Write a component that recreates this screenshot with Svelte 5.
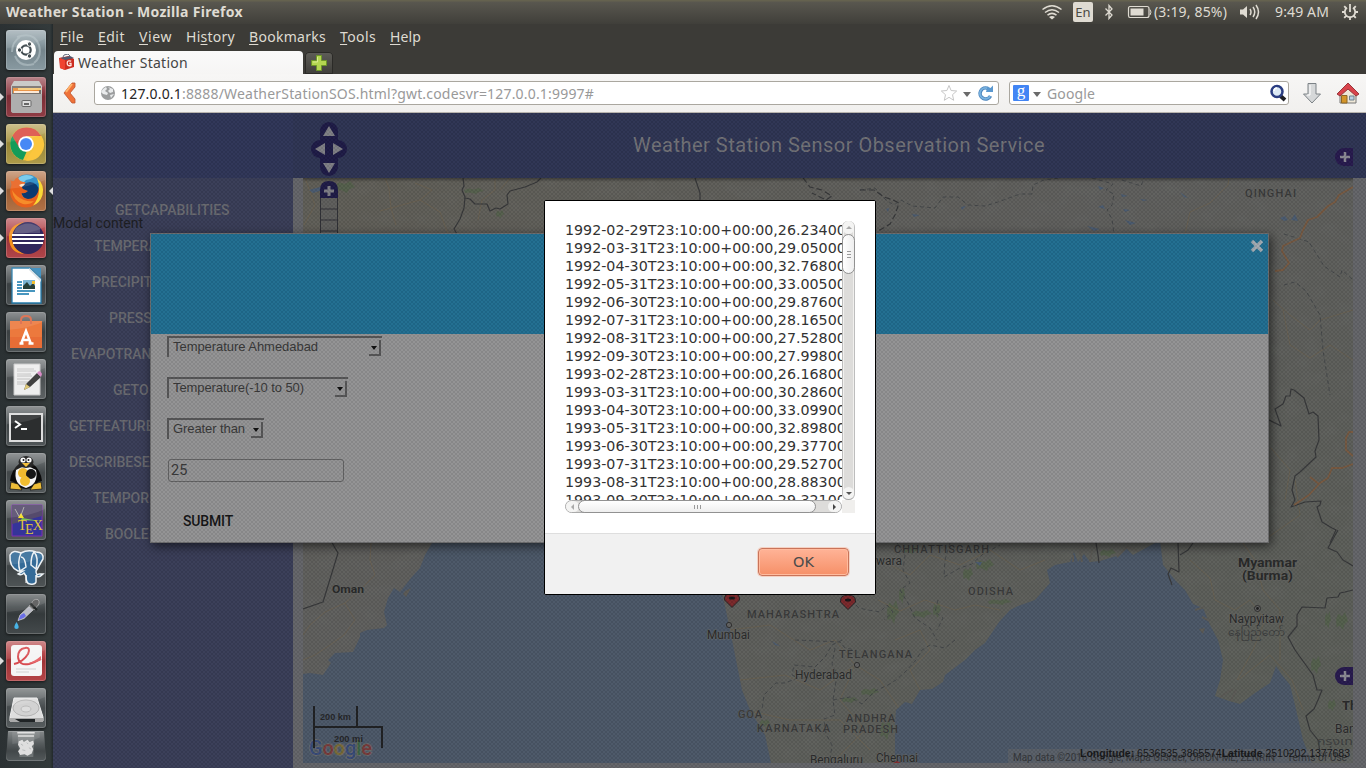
<script>
  // Tracks a label so that it fills the given width.
  function fit(node, width) {
    const natural = node.getBoundingClientRect().width;
    const count = node.textContent.length;
    node.style.letterSpacing = (width - natural) / count + 'px';
  }

  const menus = [
    ['', 'F', 'ile', 24], ['', 'E', 'dit', 27], ['', 'V', 'iew', 33], ['Hi', 's', 'tory', 49],
    ['', 'B', 'ookmarks', 77], ['', 'T', 'ools', 36], ['', 'H', 'elp', 31]
  ];

  const launchers = [
    { id: 'dash', bg: '#82949c' },
    { id: 'files', bg: '#89323b', run: true },
    { id: 'chrome', bg: '#aa9640', run: true },
    { id: 'firefox', bg: '#ad6a3c', run: true, active: true },
    { id: 'eclipse', bg: '#ad3b40', run: true },
    { id: 'writer', bg: '#42484a' },
    { id: 'software', bg: '#42484a' },
    { id: 'editor', bg: '#555a5c' },
    { id: 'terminal', bg: '#474d4f' },
    { id: 'penguin', bg: '#4a5052' },
    { id: 'tex', bg: '#4a5052' },
    { id: 'postgres', bg: '#454b4d' },
    { id: 'picker', bg: '#3a4042' },
    { id: 'pdf', bg: '#b03a3d', run: true },
    { id: 'disk', bg: '#4d5355' },
    { id: 'trash', bg: '#4a5052' }
  ];

  const operations = [
    ['GETCAPABILITIES', 62], ['TEMPERA', 41], ['PRECIPIT', 39], ['PRESS', 56],
    ['EVAPOTRAN', 18], ['GETO', 60], ['GETFEATURE', 16],
    ['DESCRIBESE', 16], ['TEMPOR', 40], ['BOOLE', 52]
  ];

  const selects = [['Temperature Ahmedabad', 215, 145], ['Temperature(-10 to 50)', 181, 131], ['Greater than', 97, 72]];

  const observations = [
    '1992-02-29T23:10:00+00:00,26.23400', '1992-03-31T23:10:00+00:00,29.05000',
    '1992-04-30T23:10:00+00:00,32.76800', '1992-05-31T23:10:00+00:00,33.00500',
    '1992-06-30T23:10:00+00:00,29.87600', '1992-07-31T23:10:00+00:00,28.16500',
    '1992-08-31T23:10:00+00:00,27.52800', '1992-09-30T23:10:00+00:00,27.99800',
    '1993-02-28T23:10:00+00:00,26.16800', '1993-03-31T23:10:00+00:00,30.28600',
    '1993-04-30T23:10:00+00:00,33.09900', '1993-05-31T23:10:00+00:00,32.89800',
    '1993-06-30T23:10:00+00:00,29.37700', '1993-07-31T23:10:00+00:00,29.52700',
    '1993-08-31T23:10:00+00:00,28.88300', '1993-09-30T23:10:00+00:00,29.32100'
  ];

  const sea = [
    'M303 674L310 673L323 675L331 663L328 660L335 653L353 652L360 637V633L367 630L384 628L387 625L384 612L388 598L394 588L400 592L411 578L420 568L425 555L432 543L450 520H722V595L725 606L730 630L735 655L742 690L750 710L765 735L771 763H303Z',
    'M895 763V725L896 710L905 702L912 704L920 690L932 689L943 682L945 675L965 660L975 650L985 643L999 622L1010 610L1018 606L1035 600L1050 583L1047 570L1055 565L1070 562L1074 552L1078 562L1084 554L1090 562L1100 561L1120 555L1126 548L1133 555L1155 543L1160 540L1163 565L1175 580L1185 590L1193 604L1203 608L1210 625L1218 640L1223 660L1220 680L1215 696L1229 701L1240 704L1255 693L1270 683L1276 666L1282 675L1290 685L1295 705L1303 740L1312 763Z'
  ];

  const borders = [
    'M463 178L464 186L462 190L465 197L464 208L460 219L454 229L457 234M465 198L470 199L475 204L487 204L490 211L496 208L500 209L508 204L507 195L510 191L525 187L537 182L541 178',
    'M695 178L700 193V205',
    'M331 541L338 553L323 602L303 609',
    'M1269 420L1281 426L1275 409L1283 404L1286 396H1290L1291 389L1294 390L1304 398L1309 414L1313 412L1318 416L1319 440L1315 451L1316 457L1300 472L1295 476L1292 490L1295 500L1291 507L1305 502L1321 501L1320 505L1317 507L1322 522L1332 528L1336 530L1330 543',
    'M1338 530L1328 548L1337 552L1343 560L1353 566M1353 590L1345 592L1340 593L1338 597L1327 598L1325 608L1302 607L1297 615V626L1288 637L1295 650L1313 675L1317 690L1322 690L1318 700L1314 709L1306 716L1310 730L1318 740L1320 752L1327 757',
    'M1096 543L1098 555L1099 563M1178 542L1179 572L1171 568L1168 574L1172 585M1180 555L1188 550L1193 543'
  ];

  const states = [
    'M860 190L875 188L886 200L894 205L901 200L912 206L935 208L943 197L958 197L968 205L985 206L998 202L1020 194H1032L1033 185L1044 180L1060 178M1092 178L1113 184L1106 190L1114 194L1112 205L1107 210L1112 219L1114 234M1122 180L1141 186L1144 178',
    'M1284 234L1300 239L1309 242L1324 266L1340 277L1342 270L1353 280M1284 285L1295 282L1306 291L1320 315L1323 350L1330 395',
    'M795 640L840 642L845 648L855 650L860 658M842 640L832 645L825 657L815 667L794 665L792 675L798 678L785 683H776L764 695L762 710M835 648L832 664L837 675L833 700L835 715L824 719L826 734L832 745L830 760M833 700L850 697L862 704L875 691L888 685L896 680L905 672L916 660L922 650L930 645L945 648L955 640M851 600L859 608L868 610L880 612L887 605L893 612L884 620',
    'M897 543L905 555L903 570L910 583L900 590L908 603L915 618L930 628L937 640M950 543L945 560L944 577L960 568L972 564L983 554L1000 545M938 600L935 612L943 618L937 630'
  ];

  // National border of the high ranges north of the plains, in heavier dashes.
  const ranges = [
    'M803 178L810 187L822 190L832 196L826 200L812 193M860 190L874 190L884 197L893 200L899 203L895 215L890 224L880 230H872'
  ];

  const roads = [
    'M305 178L315 205L304 225M385 178L389 188L391 208L380 211M391 208L396 225M391 208L420 200L432 190L415 183M420 200L440 212L448 234M495 178L495 190L482 200L478 220M500 190L510 178',
    'M371 543L370 560L375 575L360 590L345 603L355 620L344 635L330 645L315 655L303 660M345 603L325 612L310 625L303 635',
    'M878 600L900 611L925 600L955 610L975 605L1000 610M880 560L910 575L930 555L960 565L990 550L1020 570L1045 560M895 640L920 630L930 650L910 670L925 700M730 630L770 625L810 650L835 640L855 665L840 700L865 730L835 760M740 680L785 675L820 690L855 665L880 680L900 710M745 710L790 720L840 720L870 750',
    'M1190 560L1210 578L1215 600L1235 610L1250 600L1265 620L1253 650L1237 680M1243 543L1255 560L1263 590L1280 610L1280 660M1238 680L1270 655L1292 680L1303 710',
    'M1273 300L1290 315L1310 330L1320 320L1353 310M1283 310L1290 345L1310 358L1330 345L1353 360M1271 448L1290 470L1285 500M1260 543L1300 515L1295 480M1190 212L1210 203L1228 185L1229 178M1185 234L1190 212'
  ];

  const labels = [
    ['QINGHAI', 1245, 196.5, 51, 'state'], ['CHHATTISGARH', 894, 552.5, 95, 'state'],
    ['MAHARASHTRA', 747, 617.5, 92, 'state'], ['ODISHA', 968, 594.5, 45, 'state'],
    ['TELANGANA', 839, 657.5, 73, 'state'], ['GOA', 738, 717.5, 24, 'state'],
    ['KARNATAKA', 757, 731.5, 73, 'state'], ['ANDHRA', 846, 721.5, 49, 'state'],
    ['PRADESH', 843, 732.5, 55, 'state'], ['Mumbai', 707, 639, 43, 'city'],
    ['Hyderabad', 795, 679, 57, 'city'], ['Bengaluru', 810, 763.5, 53, 'city'],
    ['Chennai', 876, 761.5, 42, 'city'], ['Naypyitaw', 1229, 623, 55, 'city'],
    ['နေပြည်တော်', 1228, 636, 57, 'native'], ['Oman', 332, 593, 32, 'nation small'],
    ['Myanmar', 1238, 567, 59, 'nation'], ['(Burma)', 1242, 580, 51, 'nation']
  ];

  const patches = [
    [345, 187, 10, 6], [474, 191, 10, 3], [500, 214, 4, 4], [911, 550, 8, 4], [922, 614, 10, 4],
    [893, 612, 6, 12], [902, 595, 3, 9], [937, 610, 4, 8], [985, 565, 9, 6], [968, 574, 5, 7],
    [1000, 602, 12, 3], [870, 692, 9, 4], [850, 700, 8, 3], [765, 723, 5, 4], [886, 730, 6, 10],
    [1328, 620, 3, 9], [1342, 621, 6, 9], [1316, 665, 5, 9], [1332, 705, 4, 6], [1108, 553, 8, 4]
  ];
</script>

<div class="desktop">
  <header class="panel">
    <strong use:fit={237}>Weather Station - Mozilla Firefox</strong>
    <div class="indicators">
      <svg class="wifi" viewBox="0 0 22 16" fill="none" stroke="#dfdbd2" stroke-width="1.5">
        <path d="M1.5 5.5Q11-2 20.5 5.5M4 8.5Q11 3 18 8.5M6.5 11.2Q11 7.5 15.5 11.2" />
        <path d="M8 13Q11 10.8 14 13L11 15.5Z" fill="#dfdbd2" stroke="none" />
      </svg>
      <span class="lang">En</span>
      <svg class="bt" viewBox="0 0 12 18" fill="none" stroke="#dfdbd2" stroke-width="1.3"><path d="M2.500 5.500L9 12L6 15.500V2.500L9 6L2.500 12.500" /></svg>
      <svg class="battery" viewBox="0 0 26 14"><path d="M3 1.5H20Q22 1.5 22 3.5V10.5Q22 12.5 20 12.5H3Q1.5 12.5 1.5 10.5V3.5Q1.5 1.5 3 1.5Z" fill="none" stroke="#dfdbd2" stroke-width="1.2" /><path d="M23 4.5Q25 7 23 10" fill="none" stroke="#dfdbd2" /><path d="M3.5 3.5H16.5V10.5H3.5Z" fill="#dfdbd2" /></svg>
      <span class="charge" use:fit={73}>(3:19, 85%)</span>
      <svg class="sound" viewBox="0 0 22 16"><path d="M1 5.5H4L8 2V14L4 10.5H1Z" fill="#dfdbd2" /><path d="M11 5Q13 8 11 11M14 3Q17.5 8 14 13M17 1Q22 8 17 15" fill="none" stroke="#dfdbd2" stroke-width="1.5" /></svg>
      <span class="clock" use:fit={54}>9:49 AM</span>
      <svg class="gear" viewBox="0 0 18 18" fill="none" stroke="#dfdbd2" stroke-width="1.8"><path d="M6 4.8A5.2 5.2 0 1 0 12 4.8M9 1V9M3.2 3.2L5 5M14.8 3.2L13 5M1 9H4M14 9H17M3.2 14.8L5 13M14.8 14.8L13 13M9 14V17" /></svg>
    </div>
  </header>

  <nav class="launcher">
    {#each launchers as item}
      <div class={['slot', item.id]}>
        {#if item.run}<i class="run"></i>{/if}
        {#if item.active}<i class="active"></i>{/if}
        <div class="tile" style:background-color={item.bg}>
          <svg viewBox="0 0 40 40">
            {#if item.id === 'dash'}
              <path d="M11 7Q28 1 33 15Q36 27 28 33M6 22Q6 12 14 7M9 26Q14 38 28 34" fill="none" stroke="#b2c0c5" stroke-width="2" opacity=".65" />
              <circle cx="20" cy="20" r="10" fill="#fff" /><circle cx="20" cy="20" r="4.7" fill="none" stroke="#414b50" stroke-width="2.2" />
              <g fill="#414b50" stroke="#fff" stroke-width="1"><circle cx="13.5" cy="20" r="2.2" /><circle cx="23.5" cy="14" r="2.2" /><circle cx="23.5" cy="26" r="2.2" /></g>
            {:else if item.id === 'files'}
              <path d="M8 4H33L36 9V33Q36 36 33 36H8Q5 36 5 33V9Z" fill="#c4c4c2" /><path d="M6 9H35V17H6Z" fill="#77706b" /><path d="M7 11H33V16H7Z" fill="#e88a35" /><path d="M12 11H35V13H12Z" fill="#f7cb79" /><path d="M8 14H33V16H8Z" fill="#fff" opacity=".8" /><path d="M5 17H36V33Q36 36 33 36H8Q5 36 5 33Z" fill="#aeaeae" /><rect x="16" y="23.500" width="9" height="6" rx="1" fill="#ddd" stroke="#666" /><path d="M18 26H23V28H18Z" fill="#666" />
            {:else if item.id === 'chrome'}
              <circle cx="20.5" cy="20" r="16.5" fill="#f3c43b" /><path d="M6.2 12A16.5 16.5 0 0 1 35 12H20.5L13 24Z" fill="#db4f43" /><path d="M6.2 12L13.5 24L20.5 28L17 36A16.5 16.5 0 0 1 6.2 12Z" fill="#159c59" /><path d="M20 12H35.5A16 16 0 0 1 20 36.5L28 24Z" fill="#fbc63d" /><circle cx="20" cy="20" r="7.8" fill="#fff" /><circle cx="20" cy="20" r="6" fill="#4789f5" />
            {:else if item.id === 'firefox'}
              <circle cx="21" cy="18" r="14.5" fill="#1f86c4" /><circle cx="24" cy="20" r="9" fill="#0b3a70" /><path d="M11 8Q19 1 28 6Q24 9 20 9L16 13Z" fill="#6cc7ea" />
              <path d="M4.500 9L5.500 14Q3 20 5 26Q9 36 20 36.500Q32 36 36 25Q38 16 33 9Q34 15 32 21Q29 28 22 28Q16 27 15.500 22Q19 23 22 20L17 18Q15 16 17 14Q19 13 19.500 11Q15 11 13.500 9Q12 8 12.500 6Q9 7 8 10Q6 11 4.500 9Z" fill="#e8601c" />
              <path d="M31 7Q39 14 36.500 24Q34 32 27 34.500Q33 27 33 19Q33.500 13 31 7Z" fill="#f9d937" /><path d="M6 19Q7 30 17 33Q24 34 28 30Q23 31 18 29Q10 26 6 19Z" fill="#f68d2a" /><path d="M13 14Q17 12 19 13Q18 15 15 16Z" fill="#fbe3c8" />
            {:else if item.id === 'eclipse'}
              <path d="M18 4Q2 7 3 21Q4 35 18 36Q6 30 7 19Q9 9 18 4" fill="#f5921e" /><circle cx="22" cy="20" r="16" fill="#30265c" /><path d="M10 10Q22 1 34 10V15H8Z" fill="#75718e" opacity=".55" /><path d="M6 17H38M6 21H38M7 25H37" stroke="#fff" stroke-width="2" />
            {:else if item.id === 'writer'}
              <path d="M6 3H24L35 14V38H6Z" fill="#fff" stroke="#247cac" stroke-width="1.3" /><path d="M25 3H35V13Z" fill="#3287b9" /><path d="M23 3V5L35 17V14Z" fill="#d6dee2" /><path d="M11 17H16M11 20H16M11 23H16M11 26H29M11 29H23" stroke="#4896bf" stroke-width="2" /><path d="M17 15H29V23H17Z" fill="#7cb4d3" /><path d="M17 21L21 17L24 21L27 18L29 21V24H17Z" fill="#273f38" /><path d="M26 16H29V19H26Z" fill="#f4c231" />
            {:else if item.id === 'software'}
              <path d="M4 9H36V36H4Z" fill="#ec793d" /><path d="M4 25H36V36H4Z" fill="#e4622f" opacity=".5" /><path d="M15 12V8Q15 4 20 4Q25 4 25 8V12" fill="none" stroke="#d96745" stroke-width="2" /><path d="M15 32L20 19L25 32M17 28H23M13.500 31.500H17.500M22.500 31.500H27.500" fill="none" stroke="#fff" stroke-width="2.500" />
            {:else if item.id === 'editor'}
              <path d="M8 5H34V36H8Z" fill="#eee" stroke="#c7c7c7" /><path d="M11 10H28M11 12H30M11 15H25M11 17H26M11 20H24M11 23H27M11 25H20" stroke="#b5b5b5" stroke-width=".8" /><path d="M18 31L20 25L31 14L35 18L24 28Z" fill="#414141" /><path d="M18 31L20 25L24 28Z" fill="#dec878" /><path d="M31 14L33 12Q35 12 36 15L35 18Z" fill="#d88ac6" />
            {:else if item.id === 'terminal'}
              <rect x="4" y="8" width="32" height="27" fill="#2c2e2f" stroke="#ddd" stroke-width="2" /><path d="M9 15L14 18.5L9 22" fill="none" stroke="#fff" stroke-width="2" /><path d="M15 23H21" stroke="#fff" stroke-width="2" />
            {:else if item.id === 'penguin'}
              <path d="M14 10Q5 17 4 28L8 29Q10 35 20 36Q30 35 32 29L36 28Q35 17 26 10Z" fill="#0b0b0b" /><path d="M10 17Q20 10 30 17Q33 31 20 35Q7 31 10 17Z" fill="#f4f4f4" /><ellipse cx="20" cy="9" rx="7.500" ry="6" fill="#111" /><circle cx="17" cy="7" r="2.600" fill="#fff" /><circle cx="23" cy="7" r="2.600" fill="#fff" /><circle cx="17.5" cy="7" r="1" /><circle cx="22.5" cy="7" r="1" /><path d="M16 10H24L20 14Z" fill="#f4bc29" /><circle cx="17" cy="20" r="5" fill="#efb92e" /><circle cx="25" cy="21" r="5" fill="#161616" /><circle cx="19" cy="28" r="5" fill="#f1bd30" /><path d="M5 29L12 31L16 37L4 36ZM35 29L28 31L24 37L36 36Z" fill="#edbd38" stroke="#111" stroke-width=".7" />
            {:else if item.id === 'tex'}
              <path d="M6 5H36V36H6Z" fill="#35349a" stroke="#7e2eb4" /><path d="M6 5H36V16L6 24Z" fill="#554a6c" /><path d="M9 9L14 18L18 7" stroke="#aaa" fill="none" /><path d="M16 18L34 21L15 20Z" fill="#7cc453" /><path d="M12 18L15 13L18 18Z" fill="#f6e12c" /><text x="12" y="30" class="tex-text">T<tspan dx="-1.500" dy="4">E</tspan><tspan dx="-1" dy="-4">X</tspan></text>
            {:else if item.id === 'postgres'}
              <g fill="#346b98" stroke="#edf2f5" stroke-width="1.5"><path d="M12 24Q3 20 4 8Q7 2 15 6Q22 2 30 5Q38 5 37 12L30 24Q30 29 33 27H37Q32 32 30 28V35Q29 38 24 37Q20 37 20 29L18 26Q15 29 12 27L17 24Z" /><path d="M15 6Q11 15 14 24L20 20Q19 10 15 10M28 5Q33 10 30 22L25 18Q25 9 28 5" fill="none" /></g><path d="M20 28V36" stroke="#fff" />
            {:else if item.id === 'picker'}
              <path d="M12 26.500L14 21L23 12.500L27 16L18 24.500Z" fill="#b9bbc4" stroke="#dadada" stroke-width=".7" /><path d="M12.500 26L14.500 21L18 19L20 22L17.500 24Z" fill="#6a6ee6" /><path d="M23 12L25.500 9.500Q27 4.500 32 5.500Q35 9 30.500 13L28 16Z" fill="#555" stroke="#aaa" stroke-width=".8" /><path d="M24.500 9.500L31 16" stroke="#202424" stroke-width="2.200" /><path d="M10.500 28Q6 35 10.500 35Q15 35 10.500 28" fill="#48b4e6" />
            {:else if item.id === 'pdf'}
              <rect x="5" y="4" width="31" height="31" rx="3" fill="#f5f5f5" /><path d="M8 23Q17 21 22 13Q25 6 19 7Q12 8 12 16Q13 25 23 23Q30 21 35 18" fill="none" stroke="#d84b50" stroke-width="2" /><path d="M35 15V19Q26 23 20 23Q28 21 35 15Z" fill="#e7696d" /><path d="M10 28H30M10 31H23" stroke="#ddd" stroke-width="1.500" />
            {:else if item.id === 'disk'}
              <path d="M8 10H31L37 29V33H4V29Z" fill="#dedede" stroke="#eee" /><ellipse cx="20" cy="20" rx="13" ry="8" fill="#d2d2d2" stroke="#b4b4b4" /><ellipse cx="20" cy="21" rx="5" ry="3" fill="#ddd" stroke="#bbb" /><path d="M4 30H37V34H4Z" fill="#aaa" /><path d="M9 31H29V34H14Z" fill="#202426" />
            {:else}
              <path d="M8 2H32L30 36H11Z" fill="#9ca0a0" opacity=".45" /><path d="M8 2.500H32M9 7H31" stroke="#dedede" stroke-width="2" /><path d="M10 14L15 12L17 15L22 12L25 15L30 13L31 18L28 21L30 25L28 31L22 34L18 32L12 33L9 28L12 24L9 19Z" fill="#dedede" /><path d="M13 18L16 20M15 26L19 27M24 23L27 25M21 16L23 18" fill="none" stroke="#acb0b0" />
            {/if}
            <path d="M1 1H39V9Q25 16 1 18Z" fill="#fff" opacity=".1" />
          </svg>
        </div>
      </div>
    {/each}
  </nav>

  <section class="browser">
    <div class="menubar">
      {#each menus as [before, key, after, width]}
        <span use:fit={width}>{before}<u>{key}</u>{after}</span>
      {/each}
    </div>
    <div class="tabs">
      <div class="tab">
        <svg width="17" height="17" viewBox="0 0 17 17"><path d="M1 4L11 2L16 5V13L7 16L2 14Z" fill="#cc2d20" /><path d="M2 4L7 6L16 4L12 2Z" fill="#4f5971" /><path d="M2 4L7 6V16L2 14Z" fill="#f04330" /><path d="M5 3L6 1L10 0L12 2" fill="none" stroke="#64697a" /><path d="M13.2 7.2Q9.2 5.8 9.2 9.3Q9.3 12.5 13 11.5V9.5H11.3" fill="none" stroke="#ffe6df" stroke-width="1.3" /></svg>
        <span use:fit={110}>Weather Station</span>
      </div>
      <div class="newtab"><svg width="18" height="18" viewBox="0 0 18 18"><path d="M6.5 1.5H11.5V6.5H16.5V11.5H11.5V16.5H6.5V11.5H1.5V6.5H6.5Z" fill="#b4d651" stroke="#6d9628" /><path d="M7.5 3V8H3" fill="none" stroke="#d8eb91" /></svg></div>
    </div>
    <div class="toolbar">
      <svg class="back" viewBox="0 0 16 22"><path d="M9 1L1 11L9 21H12V17L7 11L12 5V1Z" fill="#ef7239" stroke="#bd542e" stroke-width=".8" /><path d="M9 2L3 10" stroke="#ffb36b" stroke-width="2" /></svg>
      <div class="address">
        <svg width="16" height="16" viewBox="0 0 16 16"><circle cx="8" cy="8" r="7" fill="#9b9d9e" /><path d="M3 4L6 2L7 4L5 6L8 8L7 10L3 9L1 7ZM8 2L13 4V7L10 8L8 6L10 4ZM10 10L14 9L11 13Z" fill="#e9ebec" /></svg>
        <span class="url" use:fit={473}><b>127.0.0.1</b>:8888/WeatherStationSOS.html?gwt.codesvr=127.0.0.1:9997#</span>
        <svg class="star" viewBox="0 0 18 18"><path d="M9 1.5L11.1 6.5L16.7 7L12.5 10.7L13.7 16.3L9 13.3L4.3 16.3L5.5 10.7L1.3 7L6.9 6.5Z" fill="#fff" stroke="#c7c7c7" /></svg>
        <i class="caret"></i>
        <svg class="reload" viewBox="0 0 17 17"><path d="M13.5 11A5.5 5.5 0 1 1 11 3.5" fill="none" stroke="#4b85bd" stroke-width="3.6" /><path d="M13.2 11A5.5 5.5 0 1 1 11 3.5" fill="none" stroke="#78b1df" stroke-width="1.8" /><path d="M9 7H16V0.5L13.5 3L10.5 1.5Z" fill="#5b98cf" /></svg>
      </div>
      <div class="search">
        <span class="google">g</span><i class="caret"></i><span use:fit={48}>Google</span>
        <svg class="lens" viewBox="0 0 18 18"><path d="M11.5 12L16 16" stroke="#202026" stroke-width="4" /><circle cx="8" cy="7.5" r="5.5" fill="#dce9f5" stroke="#2a3d82" stroke-width="2.5" /><path d="M5 7Q5 4 8 4" fill="none" stroke="#fff" stroke-width="1.6" /></svg>
      </div>
      <svg class="download" viewBox="0 0 20 23"><path d="M6 1.5H14V12H18.5L10 21L1.5 12H6Z" fill="#d6d8d9" stroke="#7c8286" /><path d="M8 3V13H5" fill="none" stroke="#fff" /></svg>
      <svg class="home" viewBox="0 0 24 24"><path d="M4 12V22H20V12L12 5Z" fill="#eee7d7" stroke="#777" /><path d="M1 13L12 2L23 13L20 15L12 8L4 15Z" fill="#d9434b" stroke="#98373b" /><path d="M5.5 14.5H11V22H5.5Z" fill="#d49529" stroke="#8b6727" /><path d="M13.5 15H18V19H13.5Z" fill="#bad0e2" stroke="#70818e" /></svg>
    </div>

    <div class="page">
      <div class="banner"><h1 use:fit={412}>Weather Station Sensor Observation Service</h1></div>
      <aside>
        {#each operations as [name, inset]}
          <div class="operation" style:padding-left={inset + 'px'}>{name}</div>
        {/each}
      </aside>
      <main>
        <svg class="map" viewBox="303 178 1050 585">
          <defs>
            <linearGradient id="land" x1="0" x2="1" y2="1"><stop stop-color="#605e57" /><stop offset=".4" stop-color="#5f5f5d" /><stop offset="1" stop-color="#5b5e58" /></linearGradient>
            <linearGradient id="shade" y2="1" x2="0"><stop stop-opacity=".35" /><stop offset="1" stop-opacity="0" /></linearGradient>
            <filter id="relief" x="0" y="0" width="100%" height="100%"><feTurbulence type="fractalNoise" baseFrequency=".05 .07" numOctaves="4" seed="8" /><feColorMatrix values="0 0 0 0 .2 0 0 0 0 .22 0 0 0 0 .2 1.2 0 0 0 -.5" /></filter>
          </defs>
          <path d="M303 178H1353V763H303Z" fill="url(#land)" />
          <path d="M303 178H1353V763H303Z" filter="url(#relief)" opacity=".2" />
          {#each patches as [x, y, rx, ry]}<path transform="translate({x} {y}) scale({rx} {ry})" d="M-1 -.2L-.6 -.8L0 -.5L.5 -1L1 0L.4 .4L.2 1L-.4 .5L-.9 .7Z" fill="#53604a" opacity=".8" />{/each}
          {#each roads as d}<path {d} fill="none" stroke="#71624a" stroke-width="1" opacity=".5" stroke-linejoin="round" />{/each}
          {#each sea as d}<path {d} fill="#4c5868" />{/each}
          <path d="M406 597L411 588L405 591L403 594ZM1199 629L1205 628L1203 634Z" fill="#5c5b57" />
          <path d="M1073 562V555M1082 562L1080 551M1090 562L1092 550M1117 557L1127 547L1138 551M1195 610L1205 607M1202 617L1210 621M1220 697L1233 689M1231 701L1236 690" fill="none" stroke="#5c5b57" stroke-width="2" />
          <g fill="#4b5b70"><path d="M1280 218L1285 216L1288 220L1284 221ZM1291 220L1295 214L1298 221ZM1180 192L1188 198L1184 197ZM912 214L920 215L914 217ZM961 207L966 206L962 210ZM1098 186L1104 188L1100 190ZM1121 194L1128 196L1122 197ZM1140 199L1148 200L1143 201ZM1087 226L1100 229L1094 231ZM1123 209L1130 210L1125 212ZM1098 207L1103 205L1105 209ZM1125 220L1136 223L1130 225ZM1159 200L1165 201ZM886 209L889 208L888 212ZM975 562L982 562L980 566ZM772 641L780 646L775 645ZM309 190L320 187L323 190L313 193Z" /></g>
          {#each states as d}<path {d} fill="none" stroke="#45484a" stroke-width="1" stroke-dasharray="4 3" />{/each}
          {#each ranges as d}<path {d} fill="none" stroke="#37383a" stroke-width="1.2" stroke-dasharray="6 3" />{/each}
          {#each borders as d}<path {d} fill="none" stroke="#37383a" stroke-width="1.2" stroke-linejoin="round" />{/each}
          <path d="M1353 187L1339 195L1335 202L1328 206L1317 217L1308 220L1303 230L1300 238L1283 246L1282 251L1289 263L1283 270L1275 271M1353 432H1349L1346 438V450L1353 456M1353 464L1342 468H1332L1328 478L1320 483L1309 495L1294 505M1319 484L1310 477" fill="none" stroke="#775941" stroke-width="1.800" stroke-linejoin="round" />
          <path d="M303 178H1353V182H303Z" fill="url(#shade)" />
          <g fill="#626262" stroke="#303030" stroke-width="1"><circle cx="729" cy="625" r="2.6" /><circle cx="857" cy="665" r="2.6" /><circle cx="1257.500" cy="608.500" r="3" /></g><circle cx="1257.500" cy="608.500" r="1.4" fill="#202020" />
          {#each labels as [text, x, y, width, kind]}
            <text {x} {y} class={kind} textLength={width} lengthAdjust={kind === 'state' ? 'spacing' : 'spacingAndGlyphs'}>{text}</text>
          {/each}
          <text x="876" y="565" class="city">wara</text><text x="1342" y="710" class="nation">Th</text><text x="1335" y="733" class="city">Ban</text><text x="1317" y="745" class="native" textLength="36" lengthAdjust="spacingAndGlyphs">กรุงเท</text>
          <g fill="#7a282b" stroke="#252326"><path d="M732 607.500L724.500 600Q724 593 732 593Q740 593 739.500 600Z" /><path d="M848 609.500L840.500 602Q840 595 848 595Q856 595 855.500 602Z" /></g><ellipse cx="732" cy="598" rx="3" ry="1.5" fill="#171719" /><ellipse cx="848" cy="600" rx="3" ry="1.5" fill="#171719" /><path d="M893 763L897 761L901 763Z" fill="#842c2f" />
          <g class="logo"><text x="309" y="755" fill="#384b78" textLength="63" lengthAdjust="spacingAndGlyphs">G<tspan fill="#783a3a">o</tspan><tspan fill="#796a36">o</tspan><tspan fill="#384b78">g</tspan><tspan fill="#3c6445">l</tspan><tspan fill="#783a3a">e</tspan></text></g>
          <path d="M314 706V748M357 706V726M313 727H382V748" fill="none" stroke="#202123" stroke-width="2" />
          <text x="320" y="720" class="scale" textLength="31" lengthAdjust="spacingAndGlyphs">200 km</text><text x="334" y="742" class="scale" textLength="29" lengthAdjust="spacingAndGlyphs">200 mi</text>
          <path d="M1008 749H1353V763H1008Z" fill="#656667" opacity=".55" />
          <text x="1013" y="761" class="credits" textLength="262" lengthAdjust="spacingAndGlyphs">Map data ©2016 Google, Mapa GISrael, ORION-ME, ZENRIN</text><text x="1287" y="761" class="credits" textLength="60" lengthAdjust="spacingAndGlyphs">Terms of Use</text>
          <text x="1080" y="757" class="coords" textLength="270" lengthAdjust="spacingAndGlyphs"><tspan font-weight="700">Longitude:</tspan> 6536535.3865574<tspan font-weight="700">Latitude</tspan> 2510202.1377683</text>
        </svg>
      </main>

      <svg class="pan" viewBox="0 0 38 112"><g fill="#1e1b47"><rect x="10" y="1" width="18" height="54" rx="9" /><rect x="1" y="19" width="36" height="18" rx="9" /><path d="M10 77V69Q10 60 19 60Q28 60 28 69V77Z" /></g><path d="M19 5L25 15H13ZM5 28L15 22V34ZM33 28L23 22V34ZM19 52L25 42H13ZM17.500 65H20.500V68.500H24V71.500H20.500V75H17.500V71.500H14V68.500H17.500Z" fill="#7e7e85" /><path d="M10.500 77H27.500V112H10.500Z" fill="#5e5e5c" /><path d="M10.500 77V112M27.500 77V112M10.500 88H27.500M10.500 99H27.500M10.500 110H27.500" fill="none" stroke="#303136" /></svg>
      {#each ['upper', 'lower'] as place}<svg class={['toggle', place]} viewBox="0 0 18 18"><path d="M18 0H9A9 9 0 0 0 9 18H18Z" fill="#271a4e" /><path d="M10 4V14M5 9H15" stroke="#8b8994" stroke-width="2.500" /></svg>{/each}
      <p class="note"><span use:fit={90}>Modal content</span></p>

      <div class="form">
        <div class="formhead"><svg width="14" height="14" viewBox="0 0 14 14"><path d="M2 2L12 12M12 2L2 12" stroke="#a2aab2" stroke-width="3.4" /></svg></div>
        <div class="fields">
          {#each selects as [name, width, label]}
            <div class="select" style:width={width + 'px'}><span use:fit={label}>{name}</span><i></i></div>
          {/each}
          <div class="input">25</div>
          <div class="submit"><span use:fit={50}>SUBMIT</span></div>
        </div>
      </div>
      <div class="mesh"></div>

      <div class="alert">
        <div class="content">
          <div class="list">{#each observations as row}<div>{row}</div>{/each}</div>
          <div class="vbar"><i class="up"></i><b></b><i class="down"></i></div>
          <div class="hbar"><i class="left"></i><b></b><i class="right"></i></div>
          <div class="corner"></div>
        </div>
        <footer><div class="ok">OK</div></footer>
      </div>
    </div>
  </section>
</div>

<style>
  :global(body) { margin: 0; overflow: hidden; }
  * { box-sizing: border-box; }
  svg { display: block; flex: none; }
  .desktop { width: 1366px; height: 768px; display: grid; grid-template: 24px 744px / 53px 1313px; overflow: hidden; font: 14px "Noto Sans", "Open Sans", sans-serif; }
  .panel { grid-column: 1 / 3; display: flex; align-items: center; justify-content: space-between; padding: 0 7px 2px 6px; color: #dfdbd2; background: linear-gradient(#65624f 0 1px, #59574f 2px, #403f3a); white-space: nowrap; }
  .panel strong { font-size: 14px; }
  .indicators { display: flex; align-items: center; }
  .indicators svg { position: relative; top: 1px; }
  .wifi { width: 22px; height: 16px; }
  .lang { width: 20px; height: 20px; margin: 2px 0 0 10px; border-radius: 2px; background: #dfdbd2; color: #4c4a43; font-size: 13px; line-height: 20px; text-align: center; }
  .bt { width: 12px; height: 18px; margin-left: 10px; }
  .battery { width: 26px; height: 14px; margin: 0 1px 0 12px; }
  .sound { width: 22px; height: 16px; margin: 0 14px 0 12px; }
  .gear { width: 18px; height: 18px; margin-left: 12px; }

  .launcher { display: flex; flex-direction: column; gap: 7px; padding-top: 6px; background: linear-gradient(90deg, #2b3133, #333a3b 50px, #22292b); overflow: hidden; }
  .slot { position: relative; height: 40px; flex: none; padding-left: 6px; }
  .tile { width: 40px; height: 40px; border-radius: 3px; background-image: linear-gradient(#ffffff55, #ffffff10 13px, #0000001a 20px, #ffffff0d); box-shadow: inset 0 0 0 1px #ffffff30, 0 1px 3px #0009; }
  .tile svg { width: 40px; height: 40px; }
  .slot.trash { height: 30px; margin-top: -4px; }
  .slot.trash .tile { height: 30px; clip-path: polygon(5% 0, 95% 0, 100% 100%, 0 100%); }
  .slot.trash svg { height: 29px; }
  .run, .active { position: absolute; top: 16px; border: 4px solid transparent; }
  .run { left: 0; border-left-color: #dedede; border-right: 0; }
  .active { right: 0; border-right-color: #dedede; border-left: 0; }
  .tex-text { font: 14px "Liberation Serif", serif; fill: #e2c739; }

  .browser { display: grid; grid-template-rows: 26px 24px 39px 655px; background: #3c3b37; }
  .menubar { display: flex; align-items: center; gap: 14px; padding: 0 0 2px 7px; color: #dfdbd2; white-space: nowrap; }
  u { text-underline-offset: 2px; text-decoration-thickness: 1px; }
  .tabs { display: flex; align-items: end; gap: 2px; padding-left: 1px; }
  .tab { display: flex; align-items: center; gap: 3px; width: 249px; height: 23px; padding-left: 4px; border-radius: 4px 4px 0 0; background: linear-gradient(#fafafa, #f6f5f4); color: #444; white-space: nowrap; }
  .newtab { display: grid; place-items: center; width: 28px; height: 22px; border-radius: 4px 4px 0 0; background: linear-gradient(#5e5d58, #3f3e3a); box-shadow: inset 0 0 0 1px #2b2a27; }
  .toolbar { display: flex; align-items: center; background: linear-gradient(#f7f6f5, #f1f0ee); border-bottom: 1px solid #b8b4ae; }
  .back { width: 16px; height: 22px; margin: 0 14px 0 10px; }
  .address, .search { height: 24px; display: flex; align-items: center; border: 1px solid #aaa79f; border-radius: 3px; background: #fff; color: #999; white-space: nowrap; }
  .address { width: 905px; margin-left: 1px; padding: 0 4px 0 5px; }
  .url { margin-left: 5px; }
  .url b { font-weight: 400; color: #252525; }
  .star { width: 18px; height: 18px; margin-left: auto; }
  .caret { width: 0; height: 0; margin: 2px 5px 0; border: 4px solid transparent; border-top: 5px solid #6a6a6a; border-bottom: 0; }
  .reload { width: 17px; height: 17px; margin-left: 1px; }
  .search { width: 280px; margin-left: 10px; padding: 0 1px 0 3px; }
  .google { width: 16px; height: 16px; border-radius: 1px; background: #4285f4; color: #fff; font: 17px/12px "Liberation Serif", serif; text-align: center; }
  .search .caret { margin: 2px 6px 0 4px; }
  .lens { width: 18px; height: 18px; margin-left: auto; }
  .download { width: 20px; height: 23px; margin-left: 13px; }
  .home { width: 24px; height: 24px; margin-left: 14px; }

  .page { position: relative; display: grid; grid-template: 65px 590px / 240px 1073px; background: #646569; font-family: Roboto, sans-serif; overflow: hidden; }
  .banner { grid-column: 1 / 3; display: flex; align-items: center; padding: 0 0 2px 580px; background: linear-gradient(90deg, #303658 240px, #2f3554 240px); }
  h1 { margin: 0; font-size: 20px; font-weight: 400; color: #727277; white-space: nowrap; }
  aside { padding-top: 14px; background: #3a3e58; }
  .operation { height: 36px; line-height: 36px; font-size: 14px; font-weight: 500; color: #696a70; white-space: nowrap; }
  main { padding: 0 13px 5px 10px; }
  .map { width: 1050px; height: 585px; }
  .state { font: 500 11px Roboto, sans-serif; fill: #393a3a; stroke: #646461; stroke-width: .7px; paint-order: stroke; }
  .city { font: 12px Roboto, sans-serif; fill: #292a2a; stroke: #686865; stroke-width: 1px; paint-order: stroke; }
  .native { font: 11px "Noto Sans Myanmar", "Noto Sans Thai", "Noto Sans", sans-serif; fill: #3e4040; }
  .nation { font: 700 13px Roboto, sans-serif; fill: #282929; stroke: #666663; stroke-width: 1px; paint-order: stroke; }
  .small { font-size: 11.5px; }
  .logo { font: 500 20px Roboto, sans-serif; stroke: #65686b; stroke-width: 2px; paint-order: stroke; }
  .scale { font: 700 9px "Liberation Sans", sans-serif; fill: #252629; }
  .credits { font: 10.5px Roboto, sans-serif; fill: #343638; }
  .coords { font: 11px "Liberation Sans", sans-serif; fill: #17181a; }
  .pan { position: absolute; left: 257px; top: 8px; width: 38px; height: 112px; }
  .toggle { position: absolute; left: 1282px; top: 35px; width: 18px; height: 18px; }
  .toggle.lower { top: 554px; }
  .note { position: absolute; left: 0; top: 101px; margin: 0; line-height: 18px; font-size: 14px; color: #1c1d22; white-space: nowrap; }

  .form { position: absolute; left: 97px; top: 120px; width: 1119px; height: 310px; display: grid; grid-template-rows: 100px 208px; border: 1px solid #6c6c6e; background: #939394; box-shadow: 2px 3px 10px #0009; }
  .formhead { display: flex; justify-content: end; padding: 5px 4px; background: #216e91; }
  .fields { padding: 2px 16px; color: #383838; }
  .select { height: 21px; margin-bottom: 20px; display: flex; align-items: center; justify-content: space-between; padding: 0 1px 2px 4px; border: solid #565657; border-width: 2px 0 0 2px; font: 13px "Liberation Sans", sans-serif; white-space: nowrap; }
  .select i { position: relative; top: 1px; width: 12px; height: 16px; border: solid #565657; border-width: 0 2px 2px 0; }
  .select i::after { content: ""; position: absolute; left: 2px; top: 6px; border: 3px solid transparent; border-top: 4px solid #111; border-bottom: 0; }
  .input { width: 176px; height: 23px; margin: 2px 0 0 1px; padding-left: 2px; border: 1px solid #626263; border-radius: 3px; font-size: 14.500px; line-height: 21px; }
  .submit { margin: 29px 0 0 16px; line-height: 20px; font-size: 14px; font-weight: 500; color: #151516; white-space: nowrap; }
  .mesh { position: absolute; inset: 0; background: repeating-conic-gradient(#00000014 0 25%, #ffffff03 0 50%) 0 0 / 4px 4px; }

  .alert { position: absolute; left: 491px; top: 87px; width: 332px; height: 395px; display: grid; grid-template-rows: 332px 61px; border: 1px solid #000; border-radius: 2px; background: #fff; overflow: hidden; }
  .content { display: grid; grid-template: 279px 13px / 277px 13px; padding: 20px 0 0 20px; background: #fff; }
  .list { overflow: hidden; font: 14.240px/18px "DejaVu Sans", sans-serif; color: #333; white-space: nowrap; }
  .vbar, .hbar { display: grid; background: #dddcda; }
  .vbar { grid-template-rows: 13px 40px 1fr 13px; border-left: 1px solid #bdbdbd; border-right: 1px solid #bdbdbd; border-radius: 6px; box-shadow: 0 0 0 1px #f1f0ee inset; }
  .hbar { grid-template-columns: 13px 236px 1fr 13px; border: 1px solid #aaa; border-radius: 7px; }
  .corner { background: #f0efed; }
  .content b { border: 1px solid #919191; border-radius: 7px; background: repeating-linear-gradient(#999 0 1px, transparent 1px 3px) center / 4px 7px no-repeat, linear-gradient(90deg, #fff, #eee); }
  .vbar b { margin: 0 -1px; }
  .hbar b { margin: -1px; background: repeating-linear-gradient(90deg, #999 0 1px, transparent 1px 3px) center / 7px 4px no-repeat, linear-gradient(#fff, #eee); }
  .content i { display: grid; place-items: center; background: #f4f4f3; border-radius: 6px; }
  .content i::after { content: ""; border: 3px solid transparent; }
  .up::after { border-bottom-color: #aaa !important; border-top: 0 !important; }
  .down { grid-row: 4; border-bottom: 1px solid #aaa; }
  .down::after { border-top-color: #555 !important; border-bottom: 0 !important; }
  .left::after { border-right-color: #aaa !important; border-left: 0 !important; }
  .right { grid-column: 4; }
  .right::after { border-left-color: #444 !important; border-right: 0 !important; }
  footer { display: flex; justify-content: end; padding: 14px 26px 0 0; border-top: 1px solid #dedede; background: #f1f1f1; }
  .ok { width: 91px; height: 28px; border: 1px solid #c9745a; border-radius: 4px; background: linear-gradient(#ffb397, #f69068); box-shadow: 0 0 0 1px #f5d1c2, inset 0 0 0 1px #ffbc9f; color: #4c4c4c; font: 14.500px/27px "DejaVu Sans", sans-serif; text-align: center; }
</style>
